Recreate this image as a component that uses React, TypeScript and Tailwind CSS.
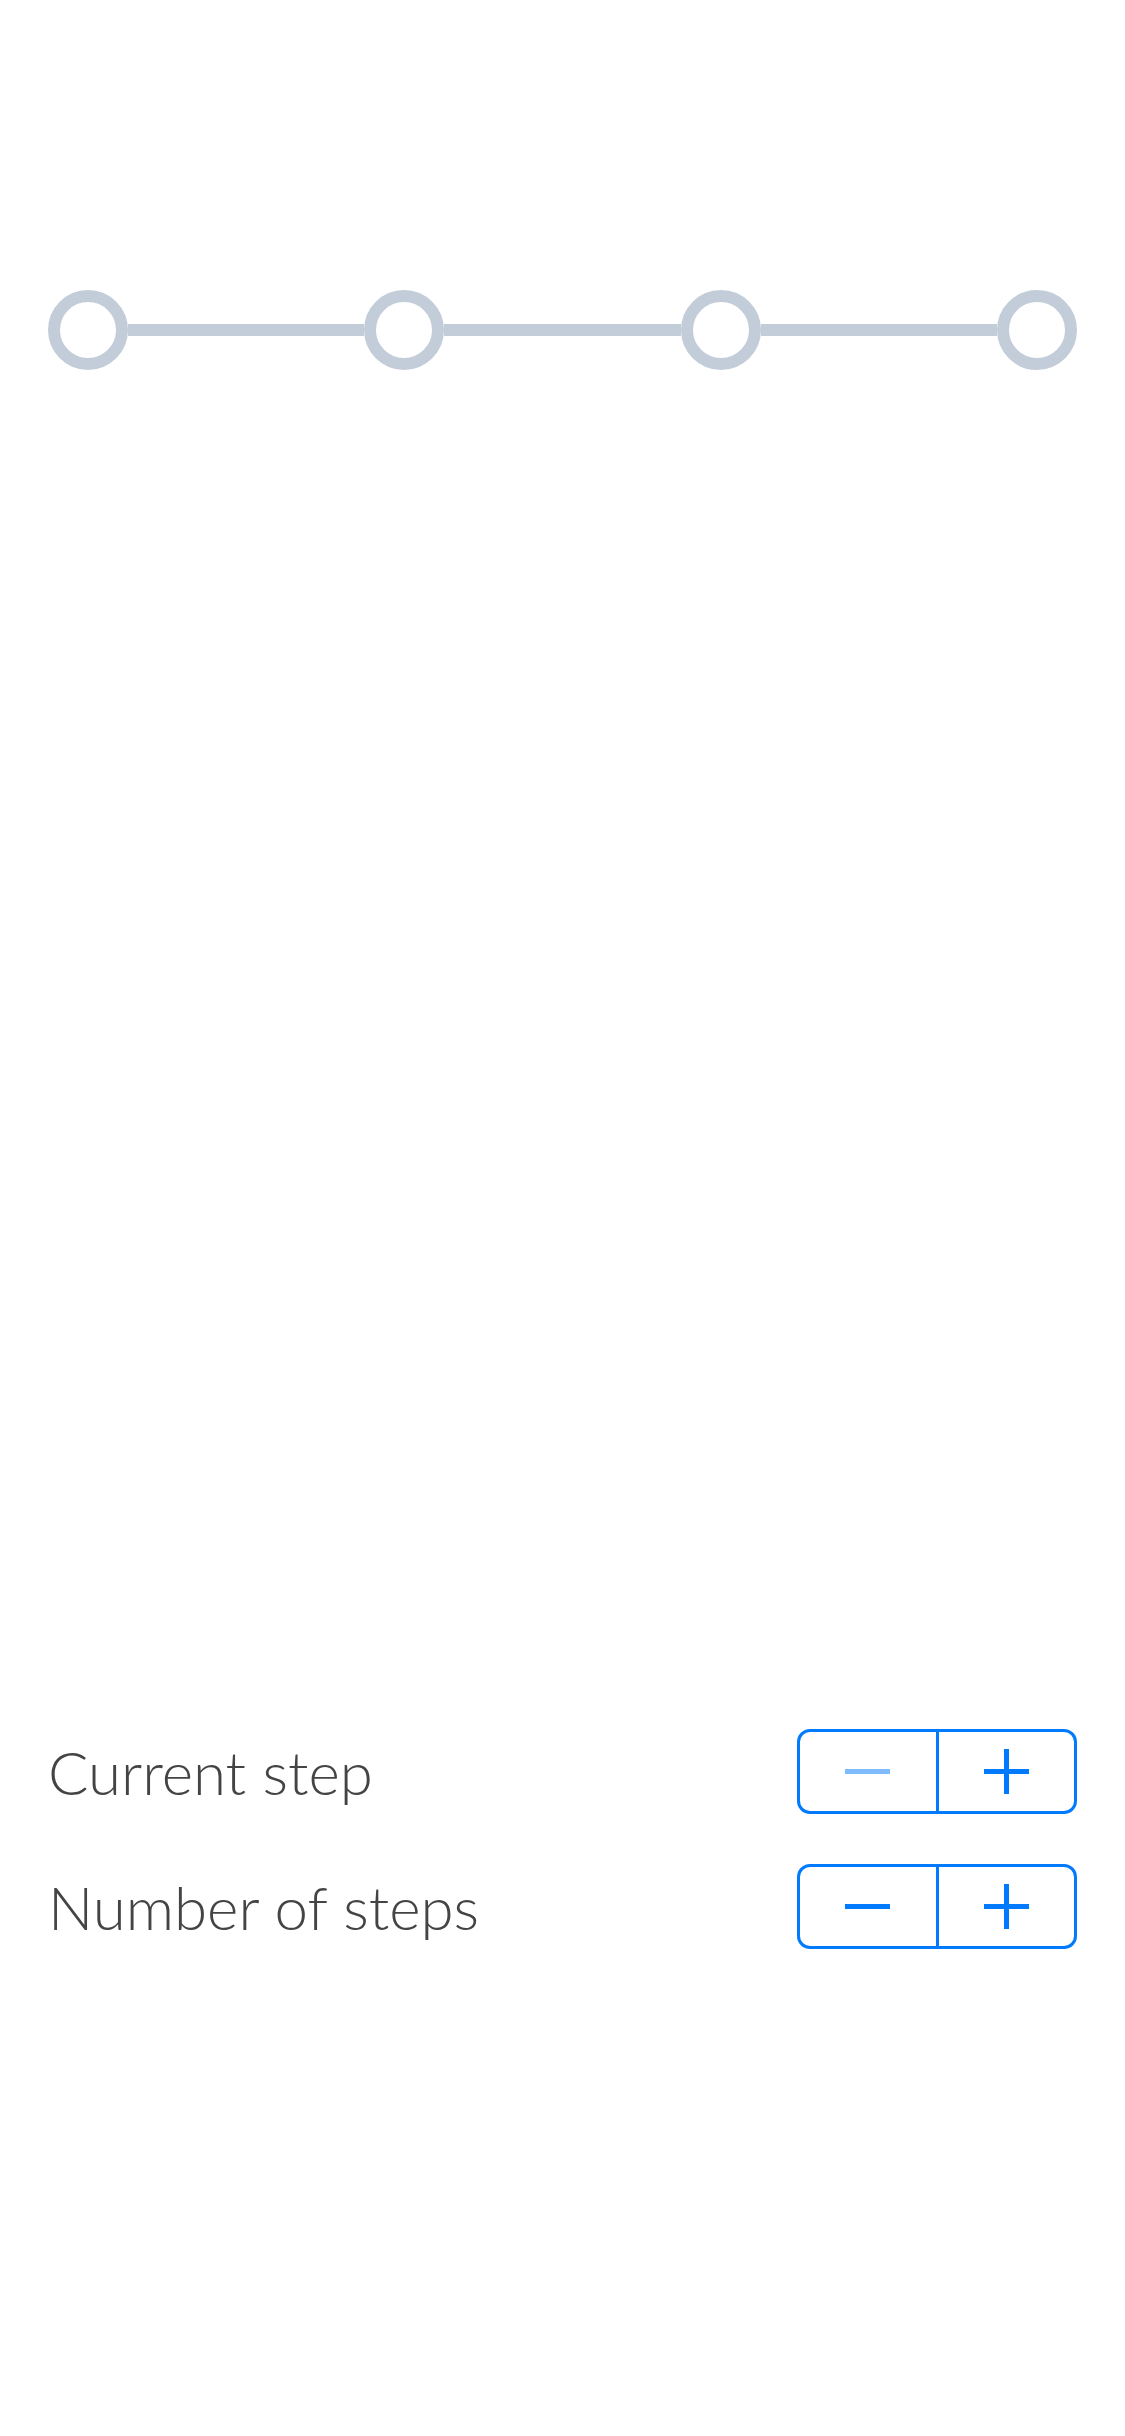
import React, { useState } from 'react'

const ringColor = 'bg-[#c3cdd9]'

const Node = () => (
  <div className="size-[80px] shrink-0 rounded-full border-[12px] border-[#c3cdd9] bg-white" />
)

const MinusIcon = ({ faded }: { faded?: boolean }) => (
  <svg width="45" height="45" viewBox="0 0 45 45" className={faded ? 'opacity-50' : ''}>
    <line x1="0" y1="22.5" x2="45" y2="22.5" stroke="#007aff" strokeWidth="5" />
  </svg>
)

const PlusIcon = () => (
  <svg width="45" height="45" viewBox="0 0 45 45">
    <line x1="0" y1="22.5" x2="45" y2="22.5" stroke="#007aff" strokeWidth="5" />
    <line x1="22.5" y1="0" x2="22.5" y2="45" stroke="#007aff" strokeWidth="5" />
  </svg>
)

type StepperRowProps = {
  label: string
  canDecrement: boolean
  onDecrement: () => void
  onIncrement: () => void
}

const StepperRow = ({ label, canDecrement, onDecrement, onIncrement }: StepperRowProps) => (
  <div className="flex h-[85px] items-center justify-between">
    <span className="font-['Lato',sans-serif] text-[60px] font-light text-[#444444]">{label}</span>
    <div className="flex h-[85px] w-[280px] overflow-hidden rounded-[13px] border-[3px] border-[#007aff]">
      <button
        type="button"
        onClick={onDecrement}
        className="flex flex-1 items-center justify-center"
      >
        <MinusIcon faded={!canDecrement} />
      </button>
      <div className="w-[3px] bg-[#007aff]" />
      <button
        type="button"
        onClick={onIncrement}
        className="flex flex-1 items-center justify-center"
      >
        <PlusIcon />
      </button>
    </div>
  </div>
)

export default function App() {
  const [current, setCurrent] = useState(0)
  const [count, setCount] = useState(4)

  return (
    <div className="flex min-h-screen flex-col bg-white px-[48px] pt-[290px]">
      <div className="flex items-center">
        {Array.from({ length: count }).map((_, i) => (
          <React.Fragment key={i}>
            {i > 0 && <div className={`h-[12px] flex-1 ${ringColor}`} />}
            <Node />
          </React.Fragment>
        ))}
      </div>

      <div className="mt-[1359px] flex flex-col gap-[50px]">
        <StepperRow
          label="Current step"
          canDecrement={current > 0}
          onDecrement={() => setCurrent((c) => Math.max(0, c - 1))}
          onIncrement={() => setCurrent((c) => Math.min(count - 1, c + 1))}
        />
        <StepperRow
          label="Number of steps"
          canDecrement={count > 1}
          onDecrement={() => setCount((c) => Math.max(1, c - 1))}
          onIncrement={() => setCount((c) => c + 1)}
        />
      </div>
    </div>
  )
}
